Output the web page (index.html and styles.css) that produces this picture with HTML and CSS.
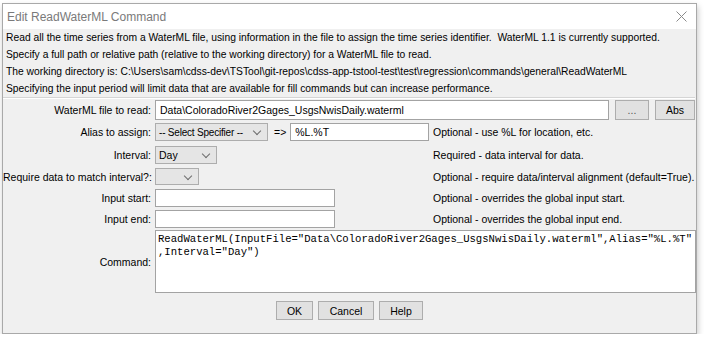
FILE: index.html
```html
<!DOCTYPE html>
<html lang="en">
<head>
  <meta charset="UTF-8">
  <title>Edit ReadWaterML Command</title>
  <link rel="stylesheet" href="styles.css">
</head>
<body>
  <div class="dialog">
    <div class="titlebar">
      <span class="title">Edit ReadWaterML Command</span>
      <svg class="close" width="11" height="11" viewBox="0 0 11 11">
        <path d="M0.5 0.5 L10.5 10.5 M10.5 0.5 L0.5 10.5" stroke="#8a8a8a" stroke-width="1" fill="none"/>
      </svg>
    </div>

    <div class="content">
      <div class="notes">
        <p>Read all the time series from a WaterML file, using information in the file to assign the time series identifier.&nbsp; WaterML 1.1 is currently supported.</p>
        <p>Specify a full path or relative path (relative to the working directory) for a WaterML file to read.</p>
        <p>The working directory is: C:\Users\sam\cdss-dev\TSTool\git-repos\cdss-app-tstool-test\test\regression\commands\general\ReadWaterML</p>
        <p>Specifying the input period will limit data that are available for fill commands but can increase performance.</p>
      </div>

      <div class="form">
        <div class="row row-file">
          <label class="label">WaterML file to read:</label>
          <div class="input input-file">Data\ColoradoRiver2Gages_UsgsNwisDaily.waterml</div>
          <button class="btn btn-browse">...</button>
          <button class="btn btn-abs">Abs</button>
        </div>

        <div class="row row-alias">
          <label class="label">Alias to assign:</label>
          <div class="field">
            <div class="combo combo-alias">-- Select Specifier --<span class="chev"></span></div>
            <span class="arrow">=&gt;</span>
            <div class="input input-alias">%L.%T</div>
          </div>
          <span class="help">Optional - use %L for location, etc.</span>
        </div>

        <div class="row row-interval">
          <label class="label">Interval:</label>
          <div class="field">
            <div class="combo combo-interval">Day<span class="chev"></span></div>
          </div>
          <span class="help">Required - data interval for data.</span>
        </div>

        <div class="row row-require">
          <label class="label">Require data to match interval?:</label>
          <div class="field">
            <div class="combo combo-require"><span class="chev"></span></div>
          </div>
          <span class="help">Optional - require data/interval alignment (default=True).</span>
        </div>

        <div class="row row-start">
          <label class="label">Input start:</label>
          <div class="field">
            <div class="input input-period"></div>
          </div>
          <span class="help">Optional - overrides the global input start.</span>
        </div>

        <div class="row row-end">
          <label class="label">Input end:</label>
          <div class="field">
            <div class="input input-period"></div>
          </div>
          <span class="help">Optional - overrides the global input end.</span>
        </div>

        <div class="row row-command">
          <label class="label">Command:</label>
          <div class="command">ReadWaterML(InputFile="Data\ColoradoRiver2Gages_UsgsNwisDaily.waterml",Alias="%L.%T"<br>,Interval="Day")</div>
        </div>
      </div>

      <div class="buttons">
        <button class="btn btn-ok">OK</button>
        <button class="btn btn-cancel">Cancel</button>
        <button class="btn btn-help">Help</button>
      </div>
    </div>
  </div>
</body>
</html>
```

FILE: styles.css
```css
body {
  margin: 0;
  background-color: #fff;
  font-family: "Liberation Sans", Arial, sans-serif;
  font-size: 10.5px;
  color: #000;
}
.dialog {
  margin: 3px 0 0 2px;
  width: 693px;
  height: 329px;
  border: 1px solid #a9a9a9;
  background-color: #f0f0f0;
  box-shadow: 1px 3px 6px rgba(0, 0, 0, 0.22);
  display: flex;
  flex-direction: column;
}
.titlebar {
  height: 25px;
  background-color: #fff;
  display: flex;
  align-items: center;
  justify-content: space-between;
  padding: 0 9px 0 4px;
}
.title {
  font-size: 12px;
  color: #7a7a7a;
}
.close {
  display: block;
}
.content {
  flex: 1;
  display: flex;
  flex-direction: column;
}
.notes {
  padding-left: 3px;
  border-bottom: 1px solid #d5d5d5;
  box-shadow: 0 1px 0 #fff;
  margin-right: 1px;
  font-size: 10.3px;
}
.notes p {
  margin: 0;
  line-height: 17px;
  white-space: nowrap;
}
.row {
  display: flex;
  align-items: center;
}
.label {
  width: 148px;
  text-align: right;
  margin-right: 4px;
  white-space: nowrap;
}
.field {
  width: 278px;
  display: flex;
  align-items: center;
  height: 100%;
}
.help {
  white-space: nowrap;
}
.input {
  box-sizing: border-box;
  background-color: #fff;
  border: 1px solid #a3a3a3;
  height: 100%;
  padding: 0 4px;
  display: flex;
  align-items: center;
  white-space: nowrap;
}
.combo {
  position: relative;
  box-sizing: border-box;
  background-color: #e5e5e5;
  border: 1px solid #adadad;
  height: 100%;
  padding: 0 3px;
  display: flex;
  align-items: center;
  white-space: nowrap;
}
.chev {
  position: absolute;
  right: 7px;
  top: 50%;
  width: 5px;
  height: 5px;
  margin-top: -4px;
  border-right: 1px solid #6d6d6d;
  border-bottom: 1px solid #6d6d6d;
  transform: rotate(45deg);
}
.btn {
  box-sizing: border-box;
  background-color: #e1e1e1;
  border: 1px solid #adadad;
  font-family: inherit;
  font-size: 10.5px;
  color: #000;
  padding: 0;
  height: 100%;
}

/* rows */
.row-file {
  margin-top: 2px;
  height: 20px;
}
.input-file {
  width: 454px;
}
.btn-browse {
  width: 34px;
  margin-left: 6px;
  color: #555;
}
.btn-abs {
  width: 40px;
  margin-left: 6px;
}
.row-alias {
  margin-top: 3px;
  height: 18px;
}
.combo-alias {
  width: 113px;
  font-size: 10px;
  letter-spacing: -0.2px;
}
.arrow {
  margin: 0 4px 0 6px;
}
.input-alias {
  width: 139px;
}
.row-interval {
  margin-top: 5px;
  height: 18px;
}
.combo-interval {
  width: 62px;
}
.row-require {
  margin-top: 4px;
  height: 17px;
}
.combo-require {
  width: 44px;
}
.row-start {
  margin-top: 4px;
  height: 18px;
}
.row-end {
  margin-top: 3px;
  height: 18px;
}
.input-period {
  width: 180px;
}
.row-command {
  margin-top: 2px;
  height: 63px;
}
.command {
  box-sizing: border-box;
  width: 541px;
  height: 100%;
  background-color: #fff;
  border: 1px solid #a3a3a3;
  padding: 2px 2px;
  font-family: "Liberation Mono", "Courier New", monospace;
  font-size: 10.6px;
  line-height: 13px;
  white-space: nowrap;
  overflow: hidden;
}
.buttons {
  display: flex;
  justify-content: center;
  gap: 5px;
  margin-top: 8px;
  height: 19px;
}
.btn-ok {
  width: 37px;
}
.btn-cancel {
  width: 56px;
}
.btn-help {
  width: 44px;
}
```
